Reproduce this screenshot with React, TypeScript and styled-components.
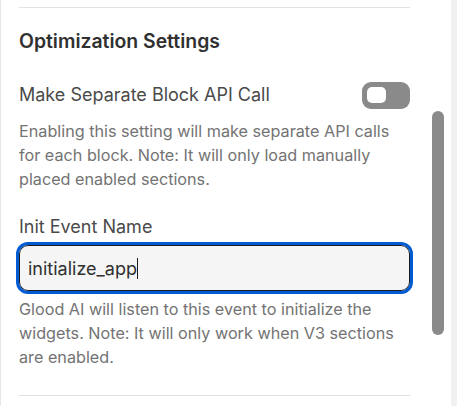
import React from "react";
import styled, { createGlobalStyle } from "styled-components";

const Global = createGlobalStyle`
  html, body { margin: 0; padding: 0; background: #ffffff; }
  body { font-family: Inter, "Noto Sans", sans-serif; -webkit-font-smoothing: antialiased; }
`;

const Page = styled.div`
  display: flex;
  width: 457px;
  height: 406px;
  overflow: hidden;
`;

const Panel = styled.div`
  flex: 1;
  display: flex;
  border-left: 1px solid #e6e6e6;
  background: #ffffff;
`;

const Content = styled.div`
  width: 391px;
  padding-left: 18px;
  padding-top: 7px;
  display: flex;
  flex-direction: column;
`;

const Divider = styled.div<{ $mt?: number }>`
  height: 1px;
  background: #e3e3e3;
  margin-top: ${(p) => p.$mt ?? 0}px;
`;

const Heading = styled.h2`
  margin: 21px 0 0;
  font-size: 19.4px;
  line-height: 24px;
  font-weight: 600;
  color: #303030;
`;

const Row = styled.div`
  margin-top: 27px;
  display: flex;
  align-items: center;
  justify-content: space-between;
  height: 30px;
`;

const Label = styled.div<{ $mt?: number }>`
  font-size: 18px;
  line-height: 24px;
  color: #4a4a4a;
  margin-top: ${(p) => p.$mt ?? 0}px;
`;

const Toggle = styled.div`
  width: 48px;
  height: 27px;
  border-radius: 9px;
  background: #8a8a8a;
  display: flex;
  align-items: center;
  padding-left: 5px;
  box-sizing: border-box;
`;

const Knob = styled.div`
  width: 19px;
  height: 16px;
  border-radius: 5px;
  background: #ffffff;
`;

const Help = styled.p<{ $mt: number }>`
  margin: ${(p) => p.$mt}px 0 0;
  font-size: 16.2px;
  line-height: 24px;
  color: #737373;
`;

const InputBox = styled.div`
  margin-top: 6px;
  height: 46px;
  box-sizing: border-box;
  border: 1px solid #1a1a1a;
  border-radius: 9px;
  background: #f5f5f5;
  outline: 3px solid #005bd3;
  outline-offset: 0.5px;
  display: flex;
  align-items: center;
  padding-left: 8px;
  font-size: 18px;
  color: #303030;
`;

const Caret = styled.span`
  display: inline-block;
  width: 1.5px;
  height: 21px;
  background: #1a1a1a;
`;

const Track = styled.div`
  width: 40px;
  display: flex;
  justify-content: flex-end;
  padding-right: 6px;
  box-sizing: border-box;
`;

const Thumb = styled.div<{ $top: number; $h: number }>`
  margin-top: ${(p) => p.$top}px;
  width: 12px;
  height: ${(p) => p.$h}px;
  border-radius: 6px;
  background: #8a8a8a;
`;

const OuterStrip = styled.div`
  width: 6px;
  background: #f1f1f1;
`;

export default function App() {
  return (
    <>
      <Global />
      <Page>
        <Panel>
          <Content>
            <Divider />
            <Heading>Optimization Settings</Heading>
            <Row>
              <Label>Make Separate Block API Call</Label>
              <Toggle>
                <Knob />
              </Toggle>
            </Row>
            <Help $mt={9}>
              Enabling this setting will make separate API calls for each block. Note: It will only load manually placed enabled sections.
            </Help>
            <Label $mt={24}>Init Event Name</Label>
            <InputBox>
              initialize_app
              <Caret />
            </InputBox>
            <Help $mt={6}>
              Glood AI will listen to this event to initialize the widgets. Note: It will only work when V3 sections are enabled.
            </Help>
            <Divider $mt={26} />
          </Content>
          <Track>
            <Thumb $top={111} $h={224} />
          </Track>
        </Panel>
        <OuterStrip />
      </Page>
    </>
  );
}
